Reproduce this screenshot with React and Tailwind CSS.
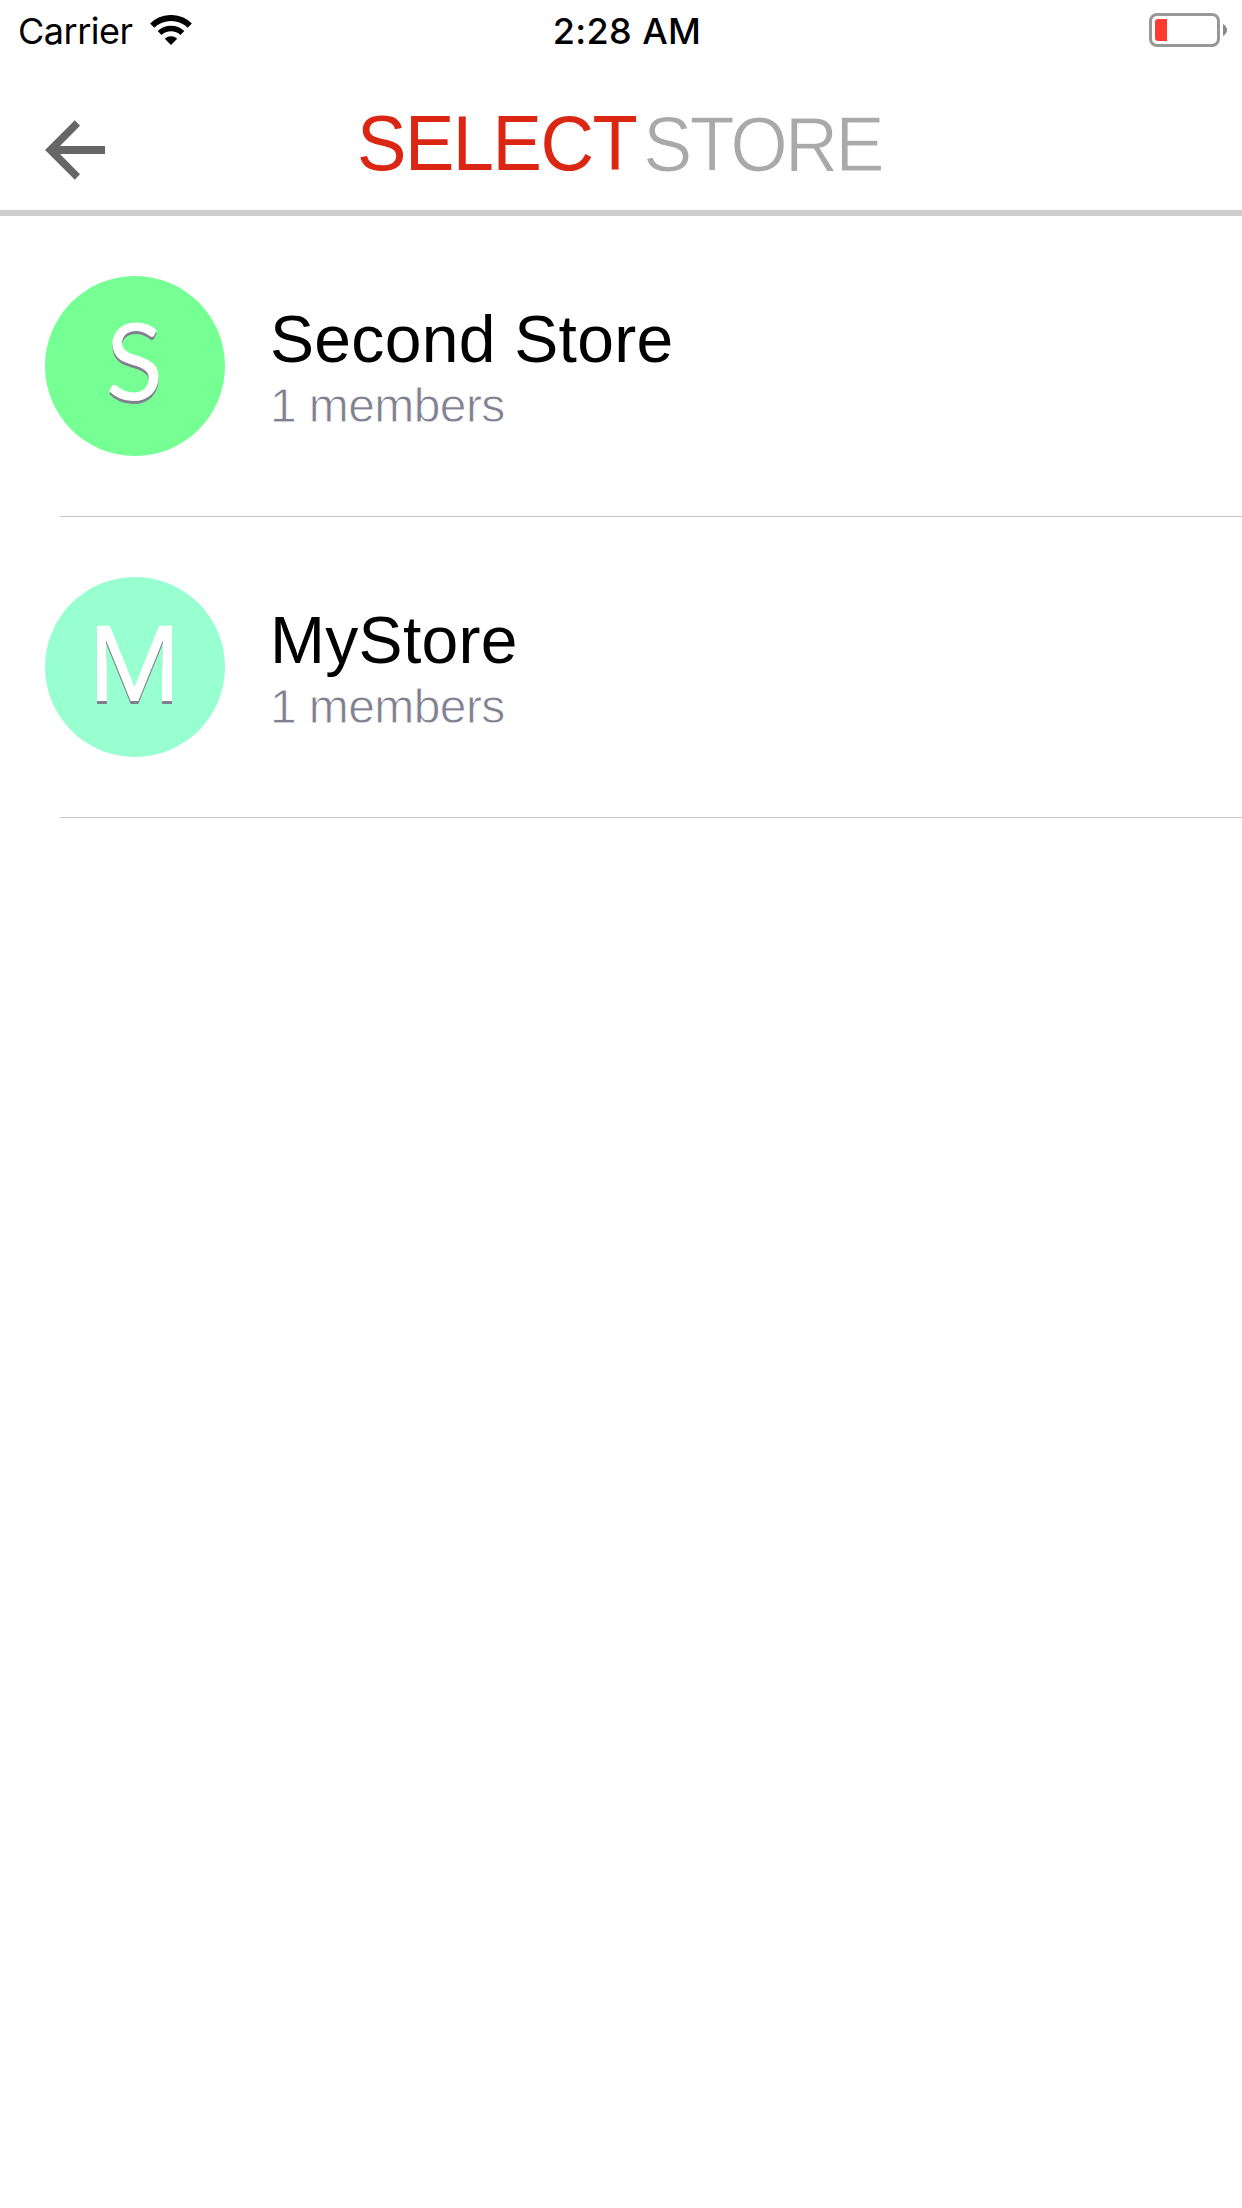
const stores = [
  { name: "Second Store", members: 1, color: "bg-[#76ff93]", letter: "font-[Lato,sans-serif] text-[106px] pb-[14px] pr-px" },
  { name: "MyStore", members: 1, color: "bg-[#97ffd0]", letter: "font-[Roboto,sans-serif] text-[106px] pb-[5px] pr-px" },
];

function WifiIcon() {
  return (
    <svg width="42" height="30" viewBox="0 0 42 30" className="block">
      <g fill="none" stroke="#000">
        <path d="M2.2 10.6a27 27 0 0 1 37.6 0" strokeWidth="6" />
        <path d="M9.6 18a16.6 16.6 0 0 1 22.8 0" strokeWidth="5.6" />
      </g>
      <path d="M21 30l-6.2-6.2a9 9 0 0 1 12.4 0z" />
    </svg>
  );
}

function BatteryIcon() {
  return (
    <svg width="79" height="34" viewBox="0 0 79 34" className="block">
      <rect x="1.5" y="1.5" width="68" height="31" rx="6.5" fill="#fff" stroke="#989898" strokeWidth="3" />
      <path d="M9 6h9v22H9a3 3 0 0 1-3-3V9a3 3 0 0 1 3-3z" fill="#ff3b30" />
      <path d="M74 11q4 2.500 4 6t-4 6z" fill="#8a8a8a" />
    </svg>
  );
}

function StatusBar() {
  return (
    <div className="grid h-[60px] grid-cols-3 items-start pr-[14px] pl-[18px] font-[Inter,sans-serif] text-[36px] leading-[44px] text-black">
      <div className="flex pt-[9px]">
        <span className="w-[132px] tracking-[-0.5px]">Carrier</span>
        <div className="pt-[6px]">
          <WifiIcon />
        </div>
      </div>
      <div className="pt-[9px] pl-[8px] text-center font-medium tracking-[0.4px] whitespace-nowrap">2:28 AM</div>
      <div className="flex justify-end pt-[13px]">
        <BatteryIcon />
      </div>
    </div>
  );
}

function Header() {
  return (
    <header className="flex h-[156px] items-start border-b-[6px] border-[#cecece]">
      <button className="mt-[60px] ml-[45px] block" aria-label="Back">
        <svg width="60" height="60" viewBox="0 0 60 60" className="block">
          <path d="M60 26v8H15l20 20.300-5.200 5.400L0 30 29.800.3 35 5.700 15 26z" fill="#666" />
        </svg>
      </button>
      <h1 className="ml-[252px] flex pt-[38px] text-[78px] leading-[90px] whitespace-nowrap">
        <span className="w-[286px] origin-left scale-x-[0.95] tracking-[-1.6px] text-[#dc2614]">SELECT</span>
        <span className="origin-left scale-x-[0.95] pt-px tracking-[-3.2px] text-[#a9a9a9] [-webkit-text-stroke:1.2px_#fff]">
          STORE
        </span>
      </h1>
    </header>
  );
}

function StoreRow({ name, members, color, letter }) {
  return (
    <li className="ml-[60px] h-[301px] border-b border-[#c8c7cc]">
      <div className="-ml-[15px] flex h-[300px] items-center">
        <div
          className={`flex size-[180px] items-center justify-center rounded-full leading-none text-white [text-shadow:0_3px_0_#808090] ${color} ${letter}`}
        >
          {name[0]}
        </div>
        <div className="ml-[45px] pt-[2px]">
          <div className="text-[66px] leading-[77px] tracking-[0.3px] text-black">{name}</div>
          <div className="text-[48px] leading-[56px] tracking-[-0.6px] text-[#808090] [-webkit-text-stroke:0.8px_#fff]">
            {members} members
          </div>
        </div>
      </div>
    </li>
  );
}

export default function App() {
  return (
    <main className="min-h-[2208px] w-[1242px] overflow-hidden bg-white font-['Liberation_Sans',Arial,sans-serif]">
      <StatusBar />
      <Header />
      <ul>
        {stores.map((store) => (
          <StoreRow key={store.name} {...store} />
        ))}
      </ul>
    </main>
  );
}
